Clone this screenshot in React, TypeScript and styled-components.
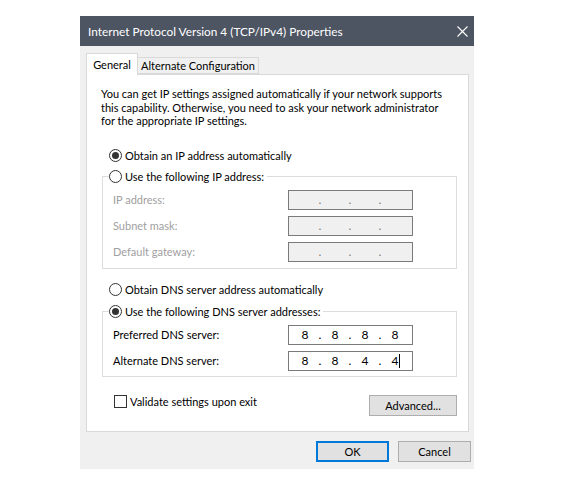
import { FC, Fragment } from "react";
import styled, { createGlobalStyle } from "styled-components";

const GlobalStyle = createGlobalStyle`
  html, body {
    margin: 0;
    background: #ffffff;
  }
  body {
    font-family: Lato, "Liberation Sans", Arial, sans-serif;
    font-size: 11px;
    color: #000000;
  }
`;

const Page = styled.div`
  padding: 16px 0 0 80px;
`;

const Dialog = styled.div`
  width: 394px;
  background: #f0f0f0;
  white-space: nowrap;
`;

const TitleBar = styled.div`
  height: 30px;
  background: #4d5563;
  color: #ffffff;
  display: flex;
  align-items: center;
  justify-content: space-between;
  padding: 0 6px 0 8px;
  font-size: 11.8px;
`;

const Body = styled.div`
  padding: 7px 5px 0 6px;
`;

const TabRow = styled.div`
  display: flex;
  align-items: flex-end;
`;

const Tab = styled.div<{ $active?: boolean; $width: number }>`
  position: relative;
  z-index: ${(p) => (p.$active ? 1 : 0)};
  box-sizing: border-box;
  width: ${(p) => p.$width}px;
  height: ${(p) => (p.$active ? 22 : 17)}px;
  margin-bottom: ${(p) => (p.$active ? -1 : 0)}px;
  margin-left: ${(p) => (p.$active ? 0 : -1)}px;
  border: 1px solid #d9d9d9;
  border-bottom: ${(p) => (p.$active ? "none" : "1px solid #d9d9d9")};
  background: ${(p) => (p.$active ? "#ffffff" : "#f0f0f0")};
  display: flex;
  align-items: center;
  justify-content: center;
  padding-bottom: ${(p) => (p.$active ? 1 : 0)}px;
`;

const Panel = styled.div`
  box-sizing: border-box;
  height: 358px;
  border: 1px solid #d9d9d9;
  background: #ffffff;
  padding: 12px 11px 0 15px;
  display: flex;
  flex-direction: column;
`;

const Description = styled.p`
  margin: 0 0 0 -1px;
  line-height: 13.5px;
`;

const RadioRow = styled.label<{ $top?: number }>`
  display: flex;
  align-items: center;
  gap: 3px;
  height: 16px;
  margin-top: ${(p) => p.$top ?? 0}px;
  margin-left: 7px;
`;

const RadioDot = styled.span<{ $checked?: boolean }>`
  box-sizing: border-box;
  width: 13px;
  height: 13px;
  border: 1px solid #333333;
  border-radius: 50%;
  display: flex;
  align-items: center;
  justify-content: center;

  &::after {
    content: "";
    display: ${(p) => (p.$checked ? "block" : "none")};
    width: 7px;
    height: 7px;
    border-radius: 50%;
    background: #333333;
  }
`;

const Group = styled.fieldset<{ $top: number; $bottom: number }>`
  margin: ${(p) => p.$top}px 0 0 0;
  padding: 5px 0 ${(p) => p.$bottom}px 10px;
  border: 1px solid #dcdcdc;
  min-width: 0;
  display: grid;
  row-gap: 6px;
`;

const Legend = styled.legend`
  margin-left: -4px;
  padding: 0 3px 0 0;

  ${RadioRow} {
    margin-left: 0;
  }
`;

const FieldRow = styled.div`
  display: flex;
  align-items: center;
  height: 20px;
`;

const FieldLabel = styled.span<{ $disabled?: boolean }>`
  width: 175px;
  color: ${(p) => (p.$disabled ? "#a0a0a0" : "#000000")};
`;

const IpBox = styled.div<{ $disabled?: boolean }>`
  box-sizing: border-box;
  width: 125px;
  height: 20px;
  border: 1px solid #7a7a7a;
  background: ${(p) => (p.$disabled ? "#f0f0f0" : "#ffffff")};
  color: ${(p) => (p.$disabled ? "#7a7a7a" : "#000000")};
  display: flex;
  align-items: center;
  padding-left: 2px;
  font-size: 12px;
`;

const Octet = styled.span`
  width: 28px;
  text-align: center;
`;

const Dot = styled.span`
  width: 2px;
  display: flex;
  justify-content: center;
`;

const Caret = styled.span`
  display: inline-block;
  width: 1px;
  height: 14px;
  margin: 0 -2px 0 1px;
  background: #000000;
  vertical-align: middle;
`;

const BottomRow = styled.div`
  margin-top: 18px;
  display: flex;
  justify-content: space-between;
  align-items: flex-start;
`;

const CheckRow = styled.label`
  display: flex;
  align-items: center;
  gap: 3px;
  margin-left: 12px;
  height: 13px;
`;

const CheckBox = styled.span`
  box-sizing: border-box;
  width: 13px;
  height: 13px;
  border: 1px solid #333333;
  background: #ffffff;
`;

const Button = styled.button<{ $width: number; $default?: boolean }>`
  box-sizing: border-box;
  width: ${(p) => p.$width}px;
  height: 21px;
  padding: 0;
  font: inherit;
  color: #000000;
  background: #e1e1e1;
  border: ${(p) => (p.$default ? "2px solid #0078d7" : "1px solid #adadad")};
`;

const Footer = styled.div`
  display: flex;
  justify-content: flex-end;
  gap: 9px;
  padding: 9px 3px 7px 0;
`;

const CloseIcon: FC = () => (
  <svg width="11" height="11" viewBox="0 0 11 11">
    <path d="M0.5 0.5 L10.5 10.5 M10.5 0.5 L0.5 10.5" stroke="#ffffff" strokeWidth="1.1" />
  </svg>
);

type IpFieldProps = {
  octets?: string[];
  disabled?: boolean;
  caret?: boolean;
};

const IpField: FC<IpFieldProps> = ({ octets = ["", "", "", ""], disabled, caret }) => (
  <IpBox $disabled={disabled}>
    {octets.map((o, i) => (
      <Fragment key={i}>
        <Octet>
          {o}
          {caret && i === 3 ? <Caret /> : null}
        </Octet>
        {i < 3 ? <Dot>.</Dot> : null}
      </Fragment>
    ))}
  </IpBox>
);

const Radio: FC<{ label: string; checked?: boolean; top?: number }> = (props) => (
  <RadioRow $top={props.top}>
    <RadioDot $checked={props.checked} />
    {props.label}
  </RadioRow>
);

export default function App() {
  return (
    <>
      <GlobalStyle />
      <Page>
        <Dialog>
          <TitleBar>
            <span>Internet Protocol Version 4 (TCP/IPv4) Properties</span>
            <CloseIcon />
          </TitleBar>
          <Body>
            <TabRow>
              <Tab $active $width={52}>General</Tab>
              <Tab $width={122}>Alternate Configuration</Tab>
            </TabRow>
            <Panel>
              <Description>
                You can get IP settings assigned automatically if your network supports
                <br />
                this capability. Otherwise, you need to ask your network administrator
                <br />
                for the appropriate IP settings.
              </Description>

              <Radio label="Obtain an IP address automatically" checked top={20} />

              <Group $top={5} $bottom={6}>
                <Legend>
                  <Radio label="Use the following IP address:" />
                </Legend>
                <FieldRow>
                  <FieldLabel $disabled>IP address:</FieldLabel>
                  <IpField disabled />
                </FieldRow>
                <FieldRow>
                  <FieldLabel $disabled>Subnet mask:</FieldLabel>
                  <IpField disabled />
                </FieldRow>
                <FieldRow>
                  <FieldLabel $disabled>Default gateway:</FieldLabel>
                  <IpField disabled />
                </FieldRow>
              </Group>

              <Radio label="Obtain DNS server address automatically" top={13} />

              <Group $top={6} $bottom={5}>
                <Legend>
                  <Radio label="Use the following DNS server addresses:" checked />
                </Legend>
                <FieldRow>
                  <FieldLabel>Preferred DNS server:</FieldLabel>
                  <IpField octets={["8", "8", "8", "8"]} />
                </FieldRow>
                <FieldRow>
                  <FieldLabel>Alternate DNS server:</FieldLabel>
                  <IpField octets={["8", "8", "4", "4"]} caret />
                </FieldRow>
              </Group>

              <BottomRow>
                <CheckRow>
                  <CheckBox />
                  Validate settings upon exit
                </CheckRow>
                <Button $width={88}>Advanced...</Button>
              </BottomRow>
            </Panel>
          </Body>
          <Footer>
            <Button $width={73} $default>
              OK
            </Button>
            <Button $width={73}>Cancel</Button>
          </Footer>
        </Dialog>
      </Page>
    </>
  );
}
